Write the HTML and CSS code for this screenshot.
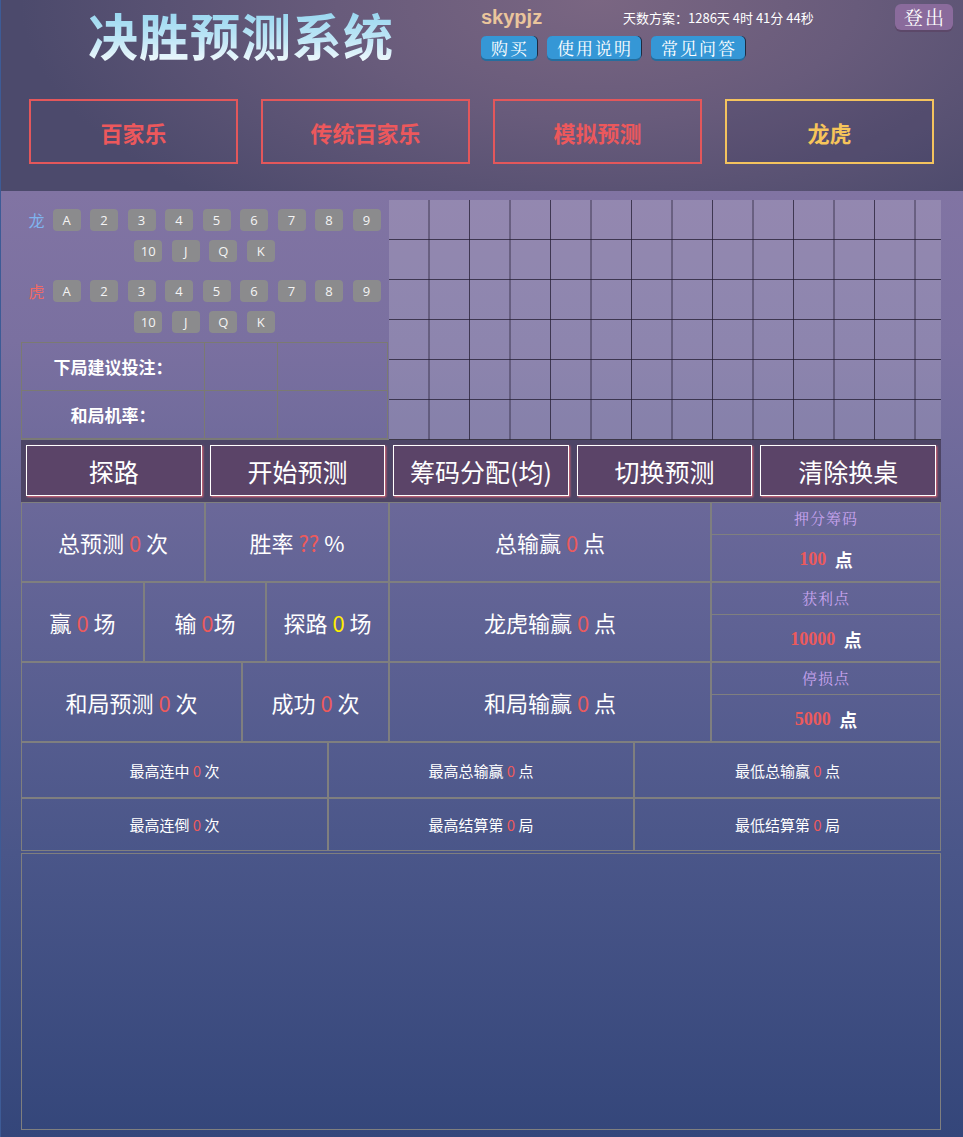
FILE: index.html
```html
<!DOCTYPE html>
<html>
<head>
    <meta charset="utf-8">
    <title>决胜预测系统</title>
    <link rel="stylesheet" href="styles.css">
</head>
<body>
    <div class="header">
        <div class="header-top">
            <div class="logo"><h1>决胜预测系统</h1></div>
            <div class="user">
                <div class="user-line">
                    <span class="uname">skypjz</span>
                    <span class="days">天数方案：1286天 4时 41分 44秒</span>
                </div>
                <div class="links">
                    <a href="#">购买</a>
                    <a href="#">使用说明</a>
                    <a href="#">常见问答</a>
                </div>
            </div>
            <a class="logout" href="#">登出</a>
        </div>
        <div class="tabs">
            <a class="tab" href="#">百家乐</a>
            <a class="tab" href="#">传统百家乐</a>
            <a class="tab" href="#">模拟预测</a>
            <a class="tab active" href="#">龙虎</a>
        </div>
    </div>

    <div class="main">
        <div class="upper">
            <div class="picker">
                <div class="cards">
                    <span class="side dragon">龙</span>
                    <span class="card">A</span><span class="card">2</span><span class="card">3</span>
                    <span class="card">4</span><span class="card">5</span><span class="card">6</span>
                    <span class="card">7</span><span class="card">8</span><span class="card">9</span>
                    <span class="card">10</span><span class="card">J</span><span class="card">Q</span>
                    <span class="card">K</span>
                </div>
                <div class="cards tiger-row">
                    <span class="side tiger">虎</span>
                    <span class="card">A</span><span class="card">2</span><span class="card">3</span>
                    <span class="card">4</span><span class="card">5</span><span class="card">6</span>
                    <span class="card">7</span><span class="card">8</span><span class="card">9</span>
                    <span class="card">10</span><span class="card">J</span><span class="card">Q</span>
                    <span class="card">K</span>
                </div>
                <table class="advice">
                    <colgroup><col class="c1"><col class="c2"><col class="c3"></colgroup>
                    <tr><th>下局建议投注：</th><td></td><td></td></tr>
                    <tr><th>和局机率：</th><td></td><td></td></tr>
                </table>
            </div>
            <div class="road"></div>
        </div>

        <div class="actions">
            <button>探路</button>
            <button>开始预测</button>
            <button>筹码分配(均)</button>
            <button>切换预测</button>
            <button>清除换桌</button>
        </div>

        <div class="stats">
            <div class="stat-row">
                <div class="cell" style="width:184px">总预测 <em>0</em> 次</div>
                <div class="cell" style="width:184px">胜率 <em>??</em> %</div>
                <div class="cell mid">总输赢 <em>0</em> 点</div>
                <div class="setting">
                    <div class="set-label">押分筹码</div>
                    <div class="set-value"><b>100</b> 点</div>
                </div>
            </div>
            <div class="stat-row">
                <div class="cell" style="width:123px">赢 <em>0</em> 场</div>
                <div class="cell" style="width:122px">输 <em>0</em>场</div>
                <div class="cell" style="width:123px">探路 <em class="yellow">0</em> 场</div>
                <div class="cell mid">龙虎输赢 <em>0</em> 点</div>
                <div class="setting">
                    <div class="set-label">获利点</div>
                    <div class="set-value"><b>10000</b> 点</div>
                </div>
            </div>
            <div class="stat-row">
                <div class="cell" style="width:221px">和局预测 <em>0</em> 次</div>
                <div class="cell" style="width:147px">成功 <em>0</em> 次</div>
                <div class="cell mid">和局输赢 <em>0</em> 点</div>
                <div class="setting">
                    <div class="set-label">停损点</div>
                    <div class="set-value"><b>5000</b> 点</div>
                </div>
            </div>
        </div>

        <div class="records">
            <div class="rec">最高连中 <em>0</em> 次</div>
            <div class="rec">最高总输赢 <em>0</em> 点</div>
            <div class="rec">最低总输赢 <em>0</em> 点</div>
            <div class="rec">最高连倒 <em>0</em> 次</div>
            <div class="rec">最高结算第 <em>0</em> 局</div>
            <div class="rec">最低结算第 <em>0</em> 局</div>
        </div>

        <div class="log"></div>
    </div>
</body>
</html>
```

FILE: styles.css
```css
body {
    margin: 0;
    font-family: "Noto Sans CJK SC", "Liberation Sans", sans-serif;
    color: #fff;
    background: linear-gradient(180deg, #8a79a7 0%, #7a70a0 30%, #5f6294 55%, #4a5689 75%, #34467a 100%);
    border-left: 1px solid #3d5b96;
    min-height: 1137px;
    box-sizing: border-box;
}
a {
    text-decoration: none;
}
em {
    font-style: normal;
    color: #ec5a5c;
}
em.yellow {
    color: #ffee00;
}

/* header */
.header {
    height: 191px;
    background: radial-gradient(ellipse 60% 140% at 62% 0%, #7a6682 0%, #685b7b 45%, #4c4a6c 100%);
}
.header-top {
    display: flex;
    height: 70px;
}
.logo {
    width: 480px;
    text-align: center;
}
.logo h1 {
    display: inline-block;
    margin: 7px 0 0;
    font-size: 50px;
    line-height: 54px;
    font-weight: bold;
    letter-spacing: 1px;
    background: linear-gradient(180deg, #92d4ef 0%, #bfe6f6 60%, #eef8fc 100%);
    -webkit-background-clip: text;
    background-clip: text;
    color: transparent;
}
.user {
    flex: 1;
}
.user-line {
    height: 36px;
    display: flex;
    align-items: center;
}
.uname {
    font-family: "Liberation Sans", sans-serif;
    font-weight: bold;
    font-size: 20px;
    color: #eac59c;
    width: 142px;
    margin-top: -2px;
}
.days {
    font-size: 13px;
    margin-top: -1px;
}
.links {
    display: flex;
    gap: 10px;
}
.links a, .logout {
    font-family: "Noto Serif CJK SC", "AR PL UMing CN", "Noto Sans CJK SC", serif;
    color: #fff;
    border-radius: 5px;
}
.links a {
    height: 23px;
    line-height: 23px;
    padding: 0 8px 0 10px;
    font-size: 17px;
    letter-spacing: 2px;
    background: #3597d6;
    box-shadow: 0 2px 0 #256d9e, 1px 0 0 #1f2a40;
}
.logout {
    align-self: flex-start;
    margin: 4px 10px 0 0;
    height: 26px;
    line-height: 26px;
    padding: 0 7px 0 9px;
    font-size: 19px;
    letter-spacing: 2px;
    background: #8a6b9c;
    box-shadow: 0 2px 0 #5c4869;
    border-radius: 6px;
}
.tabs {
    display: flex;
    gap: 23px;
    padding-left: 28px;
    margin-top: 29px;
}
.tab {
    width: 209px;
    height: 65px;
    box-sizing: border-box;
    border: 2px solid #e3575b;
    color: #ec585c;
    font-size: 22px;
    font-weight: bold;
    display: flex;
    align-items: center;
    justify-content: center;
}
.tab.active {
    border-color: #f4c35e;
    color: #f7c55a;
    background: rgba(30, 30, 70, 0.12);
}

/* main */
.main {
    width: 920px;
    margin-left: 20px;
    padding-top: 9px;
}
.upper {
    display: flex;
    height: 240px;
}
.picker {
    width: 367px;
    padding-top: 9px;
}
.cards {
    display: flex;
    flex-wrap: wrap;
    justify-content: center;
    gap: 9px 9.5px;
}
.tiger-row {
    margin-top: 18px;
}
.side {
    font-size: 16px;
    line-height: 22px;
    margin-right: -1.5px;
}
.side.dragon {
    color: #7fb4ee;
}
.side.tiger {
    color: #ef6a66;
}
.card {
    width: 28px;
    height: 22px;
    line-height: 22px;
    text-align: center;
    background: #8b8b8d;
    border-radius: 4px;
    font-family: "Open Sans", sans-serif;
    font-size: 13px;
    color: #f4f4f4;
}
.advice {
    margin-top: 9px;
    width: 367px;
    border-collapse: collapse;
    table-layout: fixed;
}
.advice .c1 {
    width: 183px;
}
.advice .c2 {
    width: 73px;
}
.advice th, .advice td {
    border: 1px solid #7b7a72;
    height: 47px;
    padding: 0;
}
.advice th {
    font-size: 17px;
    color: #fff;
}
.road {
    flex: 1;
    margin-left: 1px;
    background-color: rgba(255, 255, 255, 0.15);
    background-image:
        linear-gradient(90deg, transparent 39.5px, rgba(35, 28, 50, 0.75) 39.5px, rgba(35, 28, 50, 0.75) 40.5px, transparent 40.5px),
        linear-gradient(180deg, transparent 39px, rgba(35, 28, 50, 0.75) 39px);
    background-size: 40.5px 40px;
}

.actions {
    display: flex;
    gap: 8px;
    padding: 5px 5px 6px;
    background: #4d4566;
    border-top: 1px solid #7a7a7a;
    margin-top: -1px;
}
.actions button {
    flex: 1;
    height: 51px;
    background: #5b4468;
    border: 1px solid #fff;
    box-shadow: 1px 1px 2px #e56a78;
    color: #fff;
    font-family: "Noto Sans CJK SC", sans-serif;
    font-size: 25px;
    padding: 0;
}

/* stats */
.stat-row {
    display: flex;
    height: 80px;
}
.cell, .setting > div, .rec, .log {
    box-sizing: border-box;
    border: 1px solid #7f7f7f;
}
.cell {
    display: flex;
    align-items: center;
    justify-content: center;
    font-size: 22px;
    white-space: pre;
}
.cell.mid {
    width: 322px;
}
.setting {
    width: 230px;
    display: flex;
    flex-direction: column;
}
.set-label {
    height: 32px;
    line-height: 30px;
    text-align: center;
    font-family: "Noto Serif CJK SC", "AR PL UMing CN", "Noto Sans CJK SC", serif;
    font-size: 15px;
    letter-spacing: 1px;
    color: #c8a4ef;
    border-bottom: none !important;
}
.set-value {
    flex: 1;
    display: flex;
    align-items: center;
    justify-content: center;
    padding-top: 2px;
    font-family: "Liberation Serif", "Noto Sans CJK SC", serif;
    font-size: 18px;
    font-weight: bold;
    white-space: pre;
}
.set-value b {
    color: #ec5a5c;
    margin-right: 4px;
}

.records {
    display: grid;
    grid-template-columns: 307px 306px 307px;
    grid-template-rows: 56px 53px;
}
.rec {
    display: flex;
    align-items: center;
    justify-content: center;
    font-size: 15px;
    white-space: pre;
}
.log {
    margin-top: 2px;
    height: 277px;
}
```
